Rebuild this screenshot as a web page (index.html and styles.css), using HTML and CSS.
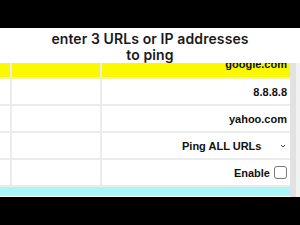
FILE: index.html
```html
<!DOCTYPE html>
<html lang="en">
<head>
    <meta charset="UTF-8">
    <meta name="viewport" content="width=device-width, initial-scale=1.0">
    <title>Ping URLs</title>
    <link rel="stylesheet" href="styles.css">
</head>
<body>

<div class="frame">
    <div class="title">enter 3 URLs or IP addresses<br>to ping</div>
    <div class="panel">
        <div class="scroll">
            <table class="url-table">
                <tr class="row-active">
                    <td class="col-mark"></td>
                    <td class="col-label"></td>
                    <td class="col-value">google.com</td>
                </tr>
                <tr>
                    <td class="col-mark"></td>
                    <td class="col-label"></td>
                    <td class="col-value">8.8.8.8</td>
                </tr>
                <tr>
                    <td class="col-mark"></td>
                    <td class="col-label"></td>
                    <td class="col-value">yahoo.com</td>
                </tr>
                <tr>
                    <td class="col-mark"></td>
                    <td class="col-label"></td>
                    <td class="col-value">
                        <div class="picker">
                            <select class="select">
                                <option>Ping ALL URLs</option>
                            </select>
                            <svg class="chevron" width="6" height="4" viewBox="0 0 6 4"><path d="M1 1 L3 3 L5 1" fill="none" stroke="#444" stroke-width="1"/></svg>
                        </div>
                    </td>
                </tr>
                <tr>
                    <td class="col-mark"></td>
                    <td class="col-label"></td>
                    <td class="col-value">
                        <label class="enable">Enable <input type="checkbox" class="check"></label>
                    </td>
                </tr>
                <tr class="row-footer">
                    <td colspan="3"></td>
                </tr>
            </table>
        </div>
        <div class="scrollbar"></div>
    </div>
</div>

</body>
</html>
```

FILE: styles.css
```css
* {
    box-sizing: border-box;
    margin: 0;
    padding: 0;
}

body {
    background: #000;
    font-family: 'Liberation Sans', Arial, sans-serif;
    height: 225px;
    overflow: hidden;
}

.frame {
    margin-top: 28px;
    height: 169px;
    background: #fff;
    display: flex;
    flex-direction: column;
}

.title {
    height: 35px;
    font-family: 'Inter', sans-serif;
    font-weight: 600;
    font-size: 14px;
    line-height: 16px;
    letter-spacing: 0.1px;
    color: #1a1a1a;
    text-align: center;
    padding-top: 3px;
    overflow: hidden;
}

.panel {
    flex: 1;
    display: flex;
    overflow: hidden;
}

.scroll {
    flex: 1;
    overflow: hidden;
}

.scrollbar {
    width: 10px;
    background: linear-gradient(90deg, #e2e2e2 0, #e2e2e2 6px, #f2f2f2 6px);
}

.url-table {
    width: 100%;
    border-collapse: collapse;
    margin-top: -13px;
}

.url-table td {
    height: 27px;
    border-bottom: 2px solid #ebebeb;
    font-size: 11px;
    font-weight: bold;
    color: #111;
}

.col-mark {
    width: 11px;
    border-right: 2px solid #ebebeb;
}

.col-label {
    width: 90px;
    border-right: 2px solid #ebebeb;
}

.col-value {
    text-align: right;
    padding-right: 3px;
}

.row-active td {
    background: #fbf800;
    height: 28px;
    border-bottom-color: #f4f2a0;
}

.picker {
    display: flex;
    justify-content: flex-end;
    align-items: center;
    gap: 17px;
}

.select {
    appearance: none;
    border: none;
    background: none;
    font-family: inherit;
    font-size: 11px;
    font-weight: bold;
    color: #111;
}

.chevron {
    margin-right: 1px;
}

.enable {
    display: flex;
    justify-content: flex-end;
    align-items: center;
    gap: 4px;
}

.check {
    appearance: none;
    width: 13px;
    height: 13px;
    border: 1px solid #777;
    border-radius: 3px;
    background: #fff;
}

.row-footer td {
    height: 10px;
    background: #a6f6fb;
    border-top: 2px solid #fff;
    border-bottom: none;
}
```
